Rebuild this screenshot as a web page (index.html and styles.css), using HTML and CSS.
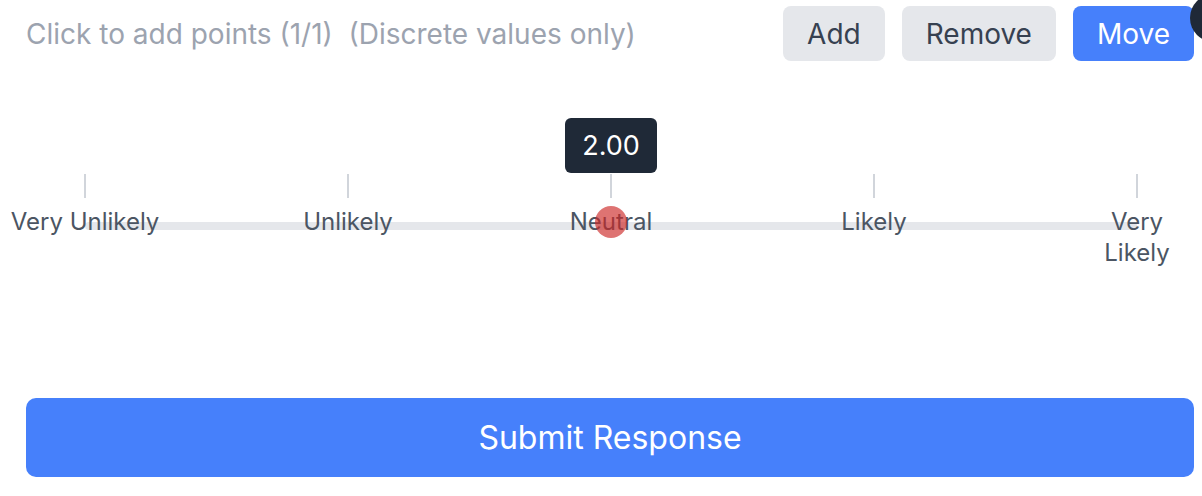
FILE: index.html
```html
<!DOCTYPE html>
<html lang="en">
<head>
<meta charset="utf-8">
<title>Likelihood scale</title>
<link rel="stylesheet" href="styles.css">
</head>
<body>
<div class="page">
  <div class="toolbar">
    <div class="hint">Click to add points (1/1)  (Discrete values only)</div>
    <div class="actions">
      <button class="btn">Add</button>
      <button class="btn">Remove</button>
      <button class="btn btn-primary">Move</button>
    </div>
  </div>
  <div class="scale">
    <div class="track"></div>
    <div class="tick" style="left:0%"></div>
    <div class="tick" style="left:25%"></div>
    <div class="tick" style="left:50%"></div>
    <div class="tick" style="left:75%"></div>
    <div class="tick" style="left:100%"></div>
    <div class="label" style="left:0%">Very Unlikely</div>
    <div class="label" style="left:25%">Unlikely</div>
    <div class="label" style="left:50%">Neutral</div>
    <div class="label" style="left:75%">Likely</div>
    <div class="label label-wrap" style="left:100%">Very Likely</div>
    <div class="tooltip" style="left:50%">2.00</div>
    <div class="dot" style="left:50%"></div>
  </div>
  <button class="submit">Submit Response</button>
</div>
<div class="corner"></div>
</body>
</html>
```

FILE: styles.css
```css
html, body {
  margin: 0;
  padding: 0;
  background: #ffffff;
  overflow: hidden;
}

body {
  font-family: Inter, "Noto Sans", sans-serif;
  width: 1202px;
  height: 496px;
  position: relative;
}

.page {
  padding: 6px 8px 0 26px;
}

.toolbar {
  display: flex;
  justify-content: space-between;
  align-items: center;
  height: 55px;
}

.hint {
  color: #9ca3af;
  font-size: 28px;
  white-space: pre;
}

.actions {
  display: flex;
  gap: 17px;
}

.btn {
  height: 55px;
  padding: 0 24px;
  border: none;
  border-radius: 8px;
  background: #e5e7eb;
  color: #374151;
  font-family: inherit;
  font-size: 28px;
  cursor: pointer;
}

.btn-primary {
  background: #4680fb;
  color: #ffffff;
}

.scale {
  position: relative;
  margin: 113px 57px 0 59px;
  height: 100px;
}

.track {
  position: absolute;
  top: 48px;
  left: 0;
  right: 0;
  height: 8px;
  border-radius: 4px;
  background: #e5e7eb;
}

.tick {
  position: absolute;
  top: 0;
  width: 2px;
  height: 24px;
  background: #d1d5db;
  transform: translateX(-50%);
}

.label {
  position: absolute;
  top: 32px;
  transform: translateX(-50%);
  font-size: 24px;
  line-height: 31px;
  color: #4b5563;
  white-space: nowrap;
  text-align: center;
}

.label-wrap {
  white-space: normal;
  width: 76px;
}

.tooltip {
  position: absolute;
  top: -56px;
  transform: translateX(-50%);
  width: 92px;
  height: 55px;
  display: flex;
  align-items: center;
  justify-content: center;
  border-radius: 6px;
  background: #1f2937;
  color: #ffffff;
  font-size: 27px;
}

.dot {
  position: absolute;
  top: 32px;
  width: 32px;
  height: 32px;
  border-radius: 50%;
  background: rgba(205, 40, 38, 0.65);
  transform: translateX(-50%);
}

.submit {
  display: block;
  width: 100%;
  height: 79px;
  margin-top: 124px;
  border: none;
  border-radius: 10px;
  background: #4680fb;
  color: #ffffff;
  font-family: inherit;
  font-size: 32px;
  cursor: pointer;
}

.corner {
  position: absolute;
  top: -6px;
  left: 1190px;
  width: 48px;
  height: 48px;
  border-radius: 50%;
  background: #1f2937;
}
```
